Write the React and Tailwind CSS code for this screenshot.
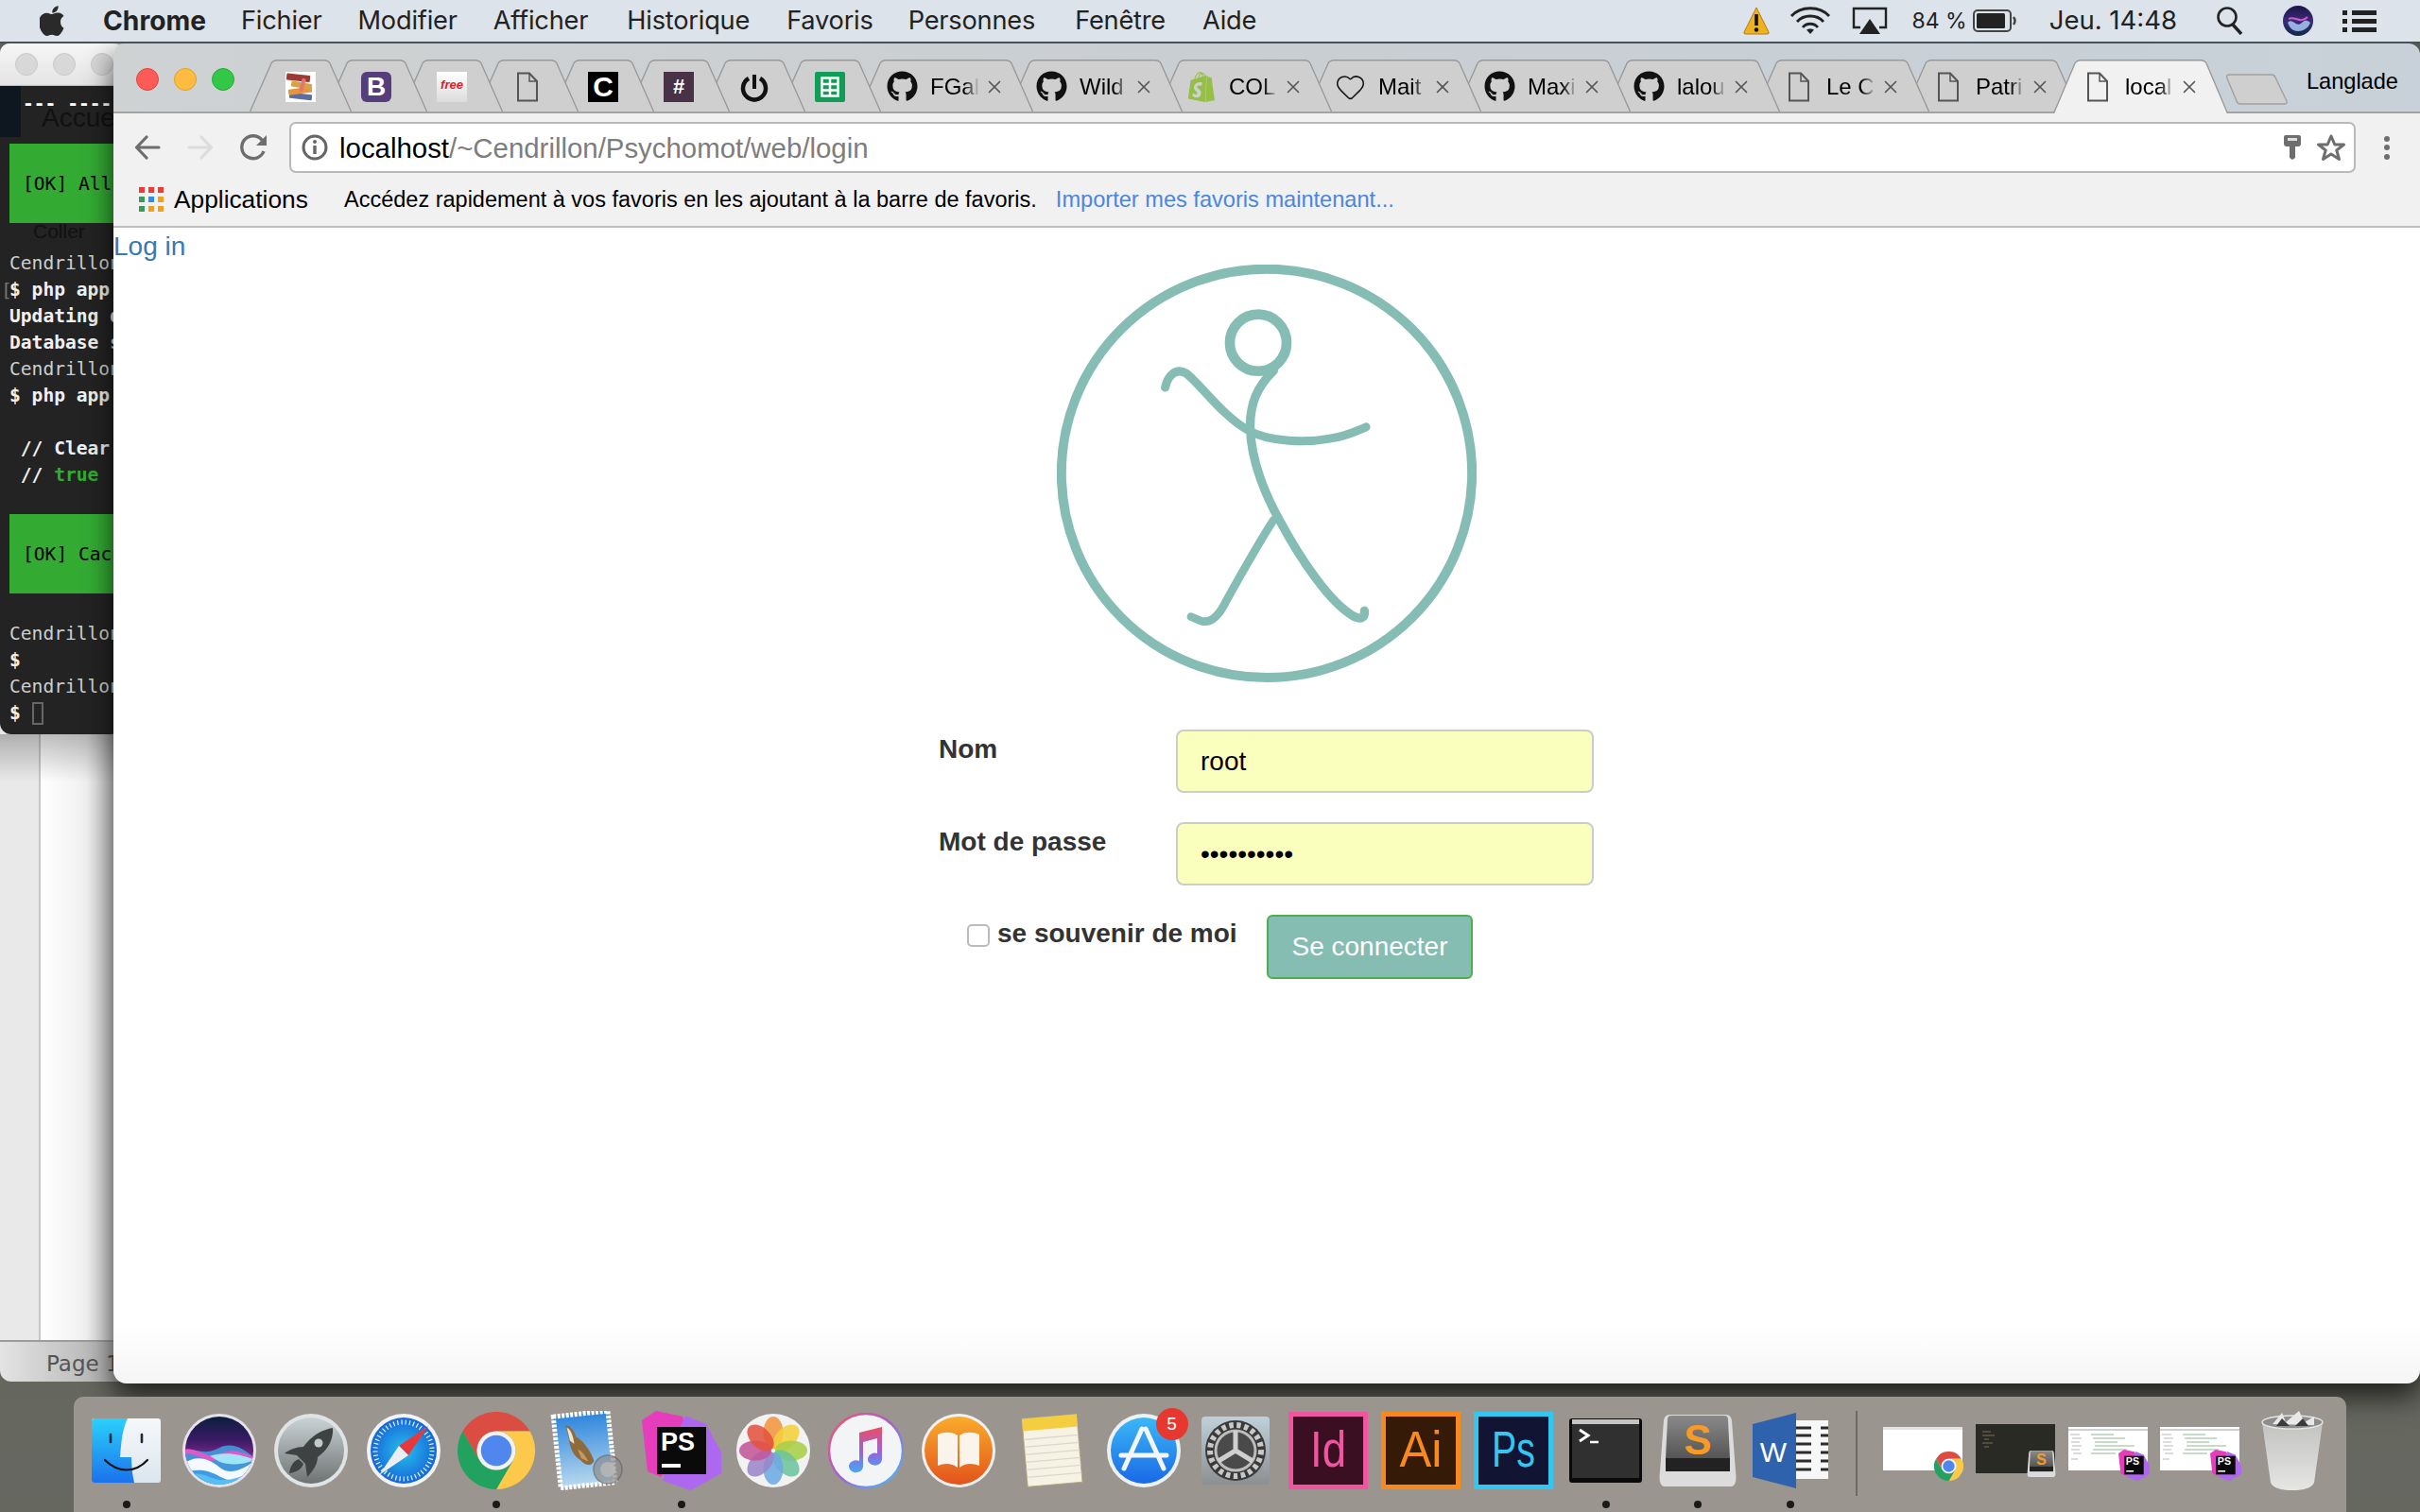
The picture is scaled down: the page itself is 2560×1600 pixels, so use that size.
import React from 'react';
import { Heart, X } from 'lucide-react';
import { FaGithub } from 'react-icons/fa';
import { SiShopify } from 'react-icons/si';

const FileIcon = () => (
  <svg width="24" height="32" viewBox="0 0 24 32" fill="none" stroke="#555" strokeWidth="2">
    <path d="M2 1.5H14L22 10V30.5H2Z" />
    <path d="M14 1.5V10H22" strokeWidth="1.5" />
  </svg>
);

const BooksIcon = () => (
  <svg width="32" height="32" viewBox="0 0 32 32">
    <rect width="32" height="32" fill="#fff" />
    <rect x="4" y="23" width="24" height="6" rx="1" fill="#5a6ea0" transform="rotate(6 16 26)" />
    <rect x="3" y="17" width="25" height="6" rx="1" fill="#e6953a" transform="rotate(-8 16 20)" />
    <rect x="6" y="11" width="22" height="6" rx="1" fill="#d7a24a" transform="rotate(10 16 14)" />
    <rect x="1" y="3" width="25" height="7" rx="1" fill="#9c3b36" transform="rotate(6 16 7)" />
    <rect x="16" y="7" width="4" height="14" fill="#e8746a" transform="rotate(15 18 14)" />
  </svg>
);

const PowerIcon = () => (
  <svg width="32" height="32" viewBox="0 0 32 32" fill="none" stroke="#111">
    <path d="M10 7A12 12 0 1 0 22 7" strokeWidth="4.5" />
    <path d="M16 3V18" strokeWidth="4" />
    <path d="M8 27A12 12 0 0 0 24 27" strokeWidth="3" />
  </svg>
);

const SheetsIcon = () => (
  <div className="w-[32px] h-[32px] rounded-[2px] bg-[#0f9d58] flex items-center justify-center">
    <svg width="20" height="22" viewBox="0 0 20 22" fill="none" stroke="#fff" strokeWidth="2.5">
      <rect x="1.5" y="1.5" width="17" height="19" />
      <path d="M1.5 8H18.5M1.5 14.5H18.5M10 1.5V20.5" />
    </svg>
  </div>
);

const pinnedTabs = [
  <BooksIcon />,
  <div className="w-[32px] h-[32px] rounded-[6px] bg-[#563d7c] text-white font-bold text-[28px] leading-[32px] text-center">B</div>,
  <div className="w-[32px] h-[32px] bg-gradient-to-b from-white to-[#dcdcdc] text-[#d8232a] italic font-bold text-[13px] leading-[28px] text-center">free</div>,
  <FileIcon />,
  <div className="w-[32px] h-[32px] bg-black text-white font-bold text-[30px] leading-[32px] text-center">C</div>,
  <div className="w-[32px] h-[32px] bg-[#4a3246] text-white font-bold text-[22px] leading-[32px] text-center">#</div>,
  <PowerIcon />,
  <SheetsIcon />,
];

const ghIcon = <FaGithub size={33} color="#111" />;

const openTabs = [
  { title: 'FGal', icon: ghIcon },
  { title: 'Wild', icon: ghIcon },
  { title: 'COL', icon: <SiShopify size={32} color="#95bf47" /> },
  { title: 'Mait', icon: <Heart size={36} strokeWidth={1.1} color="#111" /> },
  { title: 'Maxi', icon: ghIcon },
  { title: 'lalou', icon: ghIcon },
  { title: 'Le C', icon: <FileIcon /> },
  { title: 'Patri', icon: <FileIcon /> },
  { title: 'local', icon: <FileIcon />, active: true },
];

// forme du tab, les pentes se recouvrent entre voisins
const TabShape = ({ w, h, active }) => (
  <svg className="absolute inset-0" width={w} height={h} viewBox={`0 0 ${w} ${h}`}>
    <path
      d={`M0.5 ${h} L${23} 4 Q25 0.8 29 0.8 H${w - 29} Q${w - 25} 0.8 ${w - 23} 4 L${w - 0.5} ${h}`}
      fill={active ? '#f1f1f1' : '#cfcfcf'}
      stroke="#999"
      strokeWidth="1.4"
    />
  </svg>
);

const TabStrip = () => (
  <div className="relative h-[74px] shrink-0 border-b-2 border-[#a3a3a3] bg-gradient-to-r from-[#cfd2d3] via-[#c9ced2] to-[#c8d1d9] flex items-start pt-[17px] pl-[144px]">
    <div className="absolute left-[24px] top-[26px] flex gap-[16px]">
      <div className="w-[24px] h-[24px] rounded-full bg-[#fc5b57] border border-[#e2463f]" />
      <div className="w-[24px] h-[24px] rounded-full bg-[#fdbc40] border border-[#dfa023]" />
      <div className="w-[24px] h-[24px] rounded-full bg-[#33c748] border border-[#27aa35]" />
    </div>
    {pinnedTabs.map((icon, i) => (
      <div key={i} className="relative w-[108px] h-[55px] shrink-0 -mr-[28px]" style={{ zIndex: 40 - i }}>
        <TabShape w={108} h={55} />
        <div className="relative h-full flex items-center justify-center pt-[2px]">{icon}</div>
      </div>
    ))}
    {openTabs.map((t, i) => (
      <div
        key={t.title}
        className={`relative w-[185px] shrink-0 -mr-[27px] ${i === 0 ? 'ml-[4px]' : ''} ${t.active ? 'h-[57px]' : 'h-[55px]'}`}
        style={{ zIndex: t.active ? 50 : 30 - i }}
      >
        <TabShape w={185} h={t.active ? 57 : 55} active={t.active} />
        <div className="relative h-[55px] flex items-center pt-[2px] text-[24px] text-black">
          <div className="w-[63px] pl-[30px] flex justify-center shrink-0">{t.icon}</div>
          <span className="ml-[13px] w-[52px] overflow-hidden whitespace-nowrap shrink-0 [mask-image:linear-gradient(to_right,black_70%,transparent)]">{t.title}</span>
          <X size={22} strokeWidth={1.8} color="#555" className="ml-[5px] shrink-0" />
        </div>
      </div>
    ))}
    <svg className="absolute left-[2233px] top-[31px]" width="68" height="35" viewBox="0 0 68 35">
      <path d="M3 6Q1 2 6 2H50Q53 2 54 5L66 30Q67 33 63 33H17Q14 33 13 30Z" fill="#cfcfcf" stroke="#a0a0a0" strokeWidth="1.4" />
    </svg>
    <span className="absolute right-[23px] top-[27px] text-[23.6px] leading-[26px] text-black">Langlade</span>
  </div>
);

const Toolbar = () => (
  <div className="h-[121px] shrink-0 bg-[#f1f1f1] border-b-2 border-[#bdbdbd] flex flex-col">
    <div className="h-[54px] mt-[9px] flex items-center shrink-0">
      <svg className="ml-[22px]" width="28" height="26" viewBox="0 0 28 26" fill="none" stroke="#6e6e6e" strokeWidth="3.2" strokeLinecap="round" strokeLinejoin="round">
        <path d="M26 13H3M13 2L2.5 13L13 24" />
      </svg>
      <svg className="ml-[28px]" width="28" height="26" viewBox="0 0 28 26" fill="none" stroke="#dcdcdc" strokeWidth="3.2" strokeLinecap="round" strokeLinejoin="round">
        <path d="M2 13H25M15 2L25.5 13L15 24" />
      </svg>
      <svg className="ml-[28px]" width="30" height="28" viewBox="0 0 30 28" fill="none" stroke="#6e6e6e" strokeWidth="3.4">
        <path d="M25 18A12 12 0 1 1 23 6L26 9" />
        <path d="M28 1V12H17Z" fill="#6e6e6e" stroke="none" />
      </svg>
      <div className="ml-[22px] flex-1 h-[54px] bg-white border-2 border-[#b9b9b9] rounded-[7px] flex items-center pl-[11px]">
        <svg width="28" height="28" viewBox="0 0 28 28" fill="none" stroke="#666">
          <circle cx="14" cy="14" r="12" strokeWidth="3" />
          <path d="M14 12V21" strokeWidth="3.4" />
          <circle cx="14" cy="8" r="2" fill="#666" stroke="none" />
        </svg>
        <span className="ml-[12px] mt-[2px] text-[29.4px] leading-[34px] text-[#7d7d7d] whitespace-nowrap">
          <span className="text-black">localhost</span>/~Cendrillon/Psychomot/web/login
        </span>
        <svg className="ml-auto" width="18" height="26" viewBox="0 0 18 26">
          <path d="M2 0H16Q18 0 18 2V9Q18 12 15 12H12V24L9 26L6 24V12H3Q0 12 0 9V2Q0 0 2 0Z" fill="#6e6e6e" />
          <rect x="4" y="3" width="10" height="3" fill="#dedede" />
        </svg>
        <svg className="ml-[16px] mr-[8px]" width="32" height="30" viewBox="0 0 32 30" fill="none" stroke="#6e6e6e" strokeWidth="3">
          <path d="M16 3L19.8 12H29.5L21.8 18L24.5 27.5L16 22L7.5 27.5L10.2 18L2.5 12H12.2Z" strokeLinejoin="round" />
        </svg>
      </div>
      <div className="w-[68px] pr-[3px] flex flex-col items-center gap-[3.5px]">
        <div className="w-[6px] h-[6px] rounded-full bg-[#6e6e6e]" />
        <div className="w-[6px] h-[6px] rounded-full bg-[#6e6e6e]" />
        <div className="w-[6px] h-[6px] rounded-full bg-[#6e6e6e]" />
      </div>
    </div>
    <div className="flex-1 flex items-center pl-[27px]">
      <div className="grid grid-cols-3 gap-[4px] w-[26px]">
        {['#ef3b36', '#ef3b36', '#ef3b36', '#3a9b5c', '#2f8cf0', '#f0a020', '#3a9b5c', '#f0a020', '#f0a020'].map((c, i) => (
          <div key={i} className="h-[6px]" style={{ background: c }} />
        ))}
      </div>
      <span className="ml-[11px] mt-[2px] w-[180px] text-[26.3px] text-black">Applications</span>
      <span className="mt-[2px] text-[23.5px] text-black whitespace-nowrap">Accédez rapidement à vos favoris en les ajoutant à la barre de favoris.</span>
      <span className="ml-[20px] mt-[2px] text-[23.6px] text-[#4a86e0] whitespace-nowrap">Importer mes favoris maintenant...</span>
    </div>
  </div>
);

const Logo = () => (
  <svg className="mx-auto block" width="444" height="442" viewBox="85 60 1330 1325" fill="none" stroke="#85bdb5" strokeLinecap="round">
    <ellipse cx="750" cy="722" rx="651" ry="648" strokeWidth="30" />
    <circle cx="723" cy="308" r="90" strokeWidth="32" />
    <path d="M772 396C722 445 695 500 698 580C700 680 745 790 790 870C860 1000 950 1130 1020 1172C1050 1190 1062 1180 1060 1158" strokeWidth="28" />
    <path d="M428 450C435 415 460 385 495 405C540 440 610 540 690 585C760 625 880 625 950 612C1000 605 1030 590 1065 575" strokeWidth="27" />
    <path d="M772 870C720 950 670 1040 620 1130C595 1180 570 1200 540 1190L510 1177" strokeWidth="26" />
  </svg>
);

const LoginForm = () => (
  <div className="w-[694px] mx-auto mt-[50px] text-[28px] leading-[40px] text-[#333] font-bold">
    <div className="flex items-start">
      <label className="w-[251px] pt-[1px]">Nom</label>
      <input readOnly value="root" className="w-[442px] h-[67px] bg-[#faffbd] border-2 border-[#ccc] rounded-[8px] pl-[24px] text-black font-normal outline-none" />
    </div>
    <div className="flex items-start mt-[31px]">
      <label className="w-[251px] pt-[1px]">Mot de passe</label>
      <input readOnly type="password" value="••••••••••" className="w-[442px] h-[67px] bg-[#faffbd] border-2 border-[#ccc] rounded-[8px] pl-[24px] text-black font-normal outline-none" />
    </div>
    <div className="flex items-start mt-[31px]">
      <label className="w-[347px] pl-[30px] flex items-start">
        <input type="checkbox" readOnly className="appearance-none w-[24px] h-[24px] mt-[10px] bg-white border-2 border-[#bbb] rounded-[5px] shrink-0" />
        <span className="ml-[8px] whitespace-nowrap">se souvenir de moi</span>
      </label>
      <button className="w-[218px] h-[68px] bg-[#85bdb3] border-2 border-[#4cae4c] rounded-[6px] text-white font-normal">Se connecter</button>
    </div>
  </div>
);

const BrowserWindow = () => (
  <div className="absolute left-[120px] top-[46px] right-0 h-[1418px] rounded-t-[12px] rounded-b-[14px] overflow-hidden flex flex-col shadow-[0_14px_30px_rgba(0,0,0,0.7)] font-['Liberation_Sans',sans-serif]">
    <TabStrip />
    <Toolbar />
    <div className="flex-1 bg-gradient-to-b from-white via-white via-95% to-[#f5f5f5]">
      <a className="block text-[28px] leading-[39px] text-[#337ab7]">Log in</a>
      <Logo />
      <LoginForm />
    </div>
  </div>
);

const TermLine = ({ children, dim }) => (
  <div className={`h-[28px] leading-[30px] pl-[10px] whitespace-nowrap ${dim ? 'text-[#c9cfcf]' : 'text-[#f0f0f0] font-bold'}`}>{children}</div>
);

const GreenBlock = ({ children }) => (
  <div className="h-[84px] ml-[10px] pl-[14px] pt-[2px] bg-[#33ab33] text-black flex items-center whitespace-nowrap">{children}</div>
);

const TerminalWindow = () => (
  <div className="absolute left-0 top-[46px] w-[130px] h-[731px] rounded-t-[10px] rounded-b-[12px] overflow-hidden flex flex-col font-['DejaVu_Sans_Mono',monospace] text-[19.6px]">
    <div className="h-[45px] shrink-0 bg-gradient-to-b from-[#f6f6f6] to-[#e4e4e4] border-b border-[#bdbdbd] flex items-center gap-[16px] pl-[16px]">
      <div className="w-[24px] h-[24px] rounded-full bg-[#d8d8d8] border border-[#c8c8c8] shrink-0" />
      <div className="w-[24px] h-[24px] rounded-full bg-[#d8d8d8] border border-[#c8c8c8] shrink-0" />
      <div className="w-[24px] h-[24px] rounded-full bg-[#d8d8d8] border border-[#c8c8c8] shrink-0" />
    </div>
    <div className="relative flex-1 bg-[#232323] pt-[5px]">
      <div className="absolute left-0 top-0 w-[22px] h-[54px] bg-[#0e1620]" />
      <div className="absolute left-[44px] top-[16px] text-[28px] leading-[36px] text-[#111] font-['Liberation_Sans',sans-serif]">Accue</div>
      <div className="absolute left-[35px] top-[140px] text-[21px] leading-[28px] text-[#111] font-['Liberation_Sans',sans-serif]">Coller</div>
      <div className="absolute left-[1px] top-[203px] text-[#777] leading-[28px]">[</div>
      <div className="relative">
        <div className="h-[28px] leading-[28px] pl-[24px] text-white whitespace-nowrap font-bold">--- ----</div>
        <div className="h-[28px]" />
        <GreenBlock>[OK] All</GreenBlock>
        <div className="h-[28px]" />
        <TermLine dim>Cendrillon</TermLine>
        <TermLine>$ php app</TermLine>
        <TermLine>Updating d</TermLine>
        <TermLine>Database s</TermLine>
        <TermLine dim>Cendrillon</TermLine>
        <TermLine>$ php app</TermLine>
        <div className="h-[28px]" />
        <TermLine>&nbsp;// Clear</TermLine>
        <TermLine>&nbsp;// <span className="text-[#33ab33]">true</span></TermLine>
        <div className="h-[28px]" />
        <GreenBlock>[OK] Cac</GreenBlock>
        <div className="h-[28px]" />
        <TermLine dim>Cendrillon</TermLine>
        <TermLine>$</TermLine>
        <TermLine dim>Cendrillon</TermLine>
        <TermLine>
          <span className="inline-flex items-center">$<span className="ml-[12px] w-[12px] h-[24px] border-2 border-[#666]" /></span>
        </TermLine>
      </div>
    </div>
  </div>
);

const DocWindow = () => (
  <div className="absolute left-0 top-[46px] w-[140px] h-[1416px] rounded-t-[10px] rounded-b-[12px] overflow-hidden flex flex-col font-['DejaVu_Sans',sans-serif]">
    <div className="relative flex-1 flex">
      <div className="w-[41px] bg-[#e9e9e9]" />
      <div className="w-[2px] bg-[#c6c6c6]" />
      <div className="flex-1 bg-gradient-to-r from-white via-[#f0f0f0] to-[#b4b4b4]" />
      <div className="absolute left-0 right-0 top-[731px] h-[50px] bg-gradient-to-b from-black/25 to-transparent" />
    </div>
    <div className="h-[44px] shrink-0 border-t-2 border-[#9c9c9c] bg-gradient-to-r from-[#e4e4e4] to-[#a8a8a8] pl-[49px] pt-[3px] text-[23px] leading-[40px] text-[#555] whitespace-nowrap">Page 1</div>
  </div>
);

const StatusIcons = () => (
  <div className="ml-auto flex items-center pr-[46px] text-[#222] tracking-normal">
    <svg width="30" height="30" viewBox="0 0 30 30">
      <path d="M15 1L28 27Q29 29 26 29H4Q1 29 2 27Z" fill="#eeb120" stroke="#b47b1c" strokeWidth="1" />
      <path d="M15 8V20" stroke="#111" strokeWidth="3.6" />
      <circle cx="15" cy="24.5" r="2.2" fill="#111" />
    </svg>
    <svg className="ml-[20px]" width="44" height="30" viewBox="0 0 44 30" fill="none" stroke="#222" strokeWidth="2.8">
      <path d="M2 10C12 -1 32 -1 42 10" />
      <path d="M8 16C15 8 29 8 36 16" />
      <path d="M14 22C18 17 26 17 30 22" />
      <path d="M22 29L18 24.5C20 23 24 23 26 24.5Z" fill="#222" stroke="none" />
    </svg>
    <svg className="ml-[22px]" width="38" height="30" viewBox="0 0 38 30" fill="none" stroke="#222" strokeWidth="2.4">
      <path d="M9 22H2V2H36V22H29" />
      <path d="M19 13L30 29H8Z" fill="#222" stroke="none" />
    </svg>
    <span className="ml-[26px] text-[23px] whitespace-nowrap">84 %</span>
    <svg className="ml-[6px]" width="46" height="24" viewBox="0 0 46 24" fill="none">
      <rect x="1" y="1" width="39" height="22" rx="4" stroke="#444" strokeWidth="2" />
      <rect x="4" y="4" width="30" height="16" rx="1.5" fill="#222" />
      <path d="M43 8Q46 12 43 16" stroke="#444" strokeWidth="2.5" />
    </svg>
    <span className="ml-[35px] text-[27.5px] whitespace-nowrap">Jeu. 14:48</span>
    <svg className="ml-[41px]" width="30" height="30" viewBox="0 0 30 30" fill="none" stroke="#222" strokeWidth="2.6">
      <circle cx="12" cy="11" r="9.500" />
      <path d="M18 19L27 29" strokeWidth="3.4" />
    </svg>
    <svg className="ml-[41px]" width="32" height="32" viewBox="0 0 32 32">
      <defs>
        <linearGradient id="siriMini" x1="0" y1="0" x2="0" y2="1">
          <stop offset="0" stopColor="#1b1546" />
          <stop offset="0.5" stopColor="#3a2a7a" />
          <stop offset="1" stopColor="#0d2a4a" />
        </linearGradient>
      </defs>
      <circle cx="16" cy="16" r="16" fill="url(#siriMini)" />
      <path d="M5 18C10 12 14 24 20 18C24 14 27 16 29 18C27 24 21 27 16 27C10 27 7 23 5 18Z" fill="#a9c8f5" opacity="0.85" />
      <path d="M6 14C12 10 18 20 26 12" stroke="#d05ac8" strokeWidth="2" fill="none" />
    </svg>
    <div className="ml-[31px] flex flex-col gap-[4px]">
      {[0, 1, 2].map((i) => (
        <div key={i} className="flex gap-[5px]">
          <div className="w-[5px] h-[5px] bg-[#222]" />
          <div className="w-[26px] h-[5px] bg-[#222]" />
        </div>
      ))}
    </div>
  </div>
);

const MenuBar = () => (
  <div className="relative h-[46px] border-b-2 border-[#48525c] bg-[#dde3ea] flex items-center text-[#222] font-['Inter',sans-serif] text-[27.2px] tracking-[-0.2px]">
    <svg className="ml-[42px]" width="27" height="32" viewBox="0 0 27 32" fill="#2a2a2a">
      <path d="M22 17C22 13 25 11.500 25.500 11C23.500 8 20.500 7.600 19.300 7.600C16.700 7.300 14.300 9.100 13 9.100C11.600 9.100 9.600 7.600 7.400 7.700C4.500 7.700 1.900 9.400 0.500 12C-2.400 17 -0.200 24.300 2.600 28.300C4 30.300 5.600 32 7.700 32C9.700 31.900 10.500 30.700 13 30.700C15.400 30.700 16.200 32 18.300 32C20.500 32 21.900 30 23.200 28C24.800 25.800 25.400 23.600 25.500 23.500C25.400 23.400 22 22.200 22 17ZM18 5.400C19 4 19.800 2.200 19.600 0.300C18 0.400 16 1.400 14.900 2.700C13.900 3.900 13 5.700 13.300 7.500C15 7.600 16.900 6.600 18 5.400Z" />
    </svg>
    <span className="ml-[40px] font-bold text-[28.2px] tracking-normal">Chrome</span>
    <span className="ml-[37px]">Fichier</span>
    <span className="ml-[38px]">Modifier</span>
    <span className="ml-[38px]">Afficher</span>
    <span className="ml-[41px]">Historique</span>
    <span className="ml-[39px]">Favoris</span>
    <span className="ml-[37px]">Personnes</span>
    <span className="ml-[42px]">Fenêtre</span>
    <span className="ml-[39px]">Aide</span>
    <StatusIcons />
  </div>
);

/* ---------- icones du dock ---------- */

const Finder = () => (
  <svg width="73" height="68" viewBox="0 0 73 68">
    <defs>
      <linearGradient id="fnL" x1="0" y1="0" x2="0" y2="1">
        <stop offset="0" stopColor="#2ad1fb" />
        <stop offset="1" stopColor="#1b72ec" />
      </linearGradient>
      <linearGradient id="fnR" x1="0" y1="0" x2="0" y2="1">
        <stop offset="0" stopColor="#f6f8fa" />
        <stop offset="1" stopColor="#dbe6ef" />
      </linearGradient>
    </defs>
    <rect width="73" height="68" rx="3" fill="url(#fnR)" />
    <path d="M3 0H38C32 12 31 28 30 41H42C42 50 43 60 45 68H3Q0 68 0 65V3Q0 0 3 0Z" fill="url(#fnL)" />
    <path d="M20 17V25M53 17V25" stroke="#1c2b3a" strokeWidth="2.6" strokeLinecap="round" />
    <path d="M14 44C28 58 46 58 59 44" stroke="#111" strokeWidth="2.2" fill="none" strokeLinecap="round" />
  </svg>
);

const Siri = () => (
  <svg width="80" height="78" viewBox="0 0 80 80">
    <defs>
      <linearGradient id="siriBg" x1="0" y1="0" x2="0" y2="1">
        <stop offset="0" stopColor="#0a1f3c" />
        <stop offset="0.35" stopColor="#3b1a66" />
        <stop offset="0.6" stopColor="#7a2c8c" />
        <stop offset="1" stopColor="#1c7ccf" />
      </linearGradient>
      <clipPath id="siriClip">
        <circle cx="40" cy="40" r="37" />
      </clipPath>
    </defs>
    <circle cx="40" cy="40" r="40" fill="#e6e2ea" />
    <circle cx="40" cy="40" r="37" fill="url(#siriBg)" />
    <g clipPath="url(#siriClip)">
      <path d="M0 40C12 36 22 46 38 38C52 30 66 36 80 50V80H0Z" fill="#3fb2ee" opacity="0.75" />
      <path d="M0 42C14 36 24 54 42 46C54 40 66 44 80 52" stroke="#ef53c7" strokeWidth="5" fill="none" opacity="0.9" />
      <path d="M2 54C12 46 26 46 40 58C52 68 66 60 80 50V62C66 72 54 76 40 68C26 60 14 60 2 64Z" fill="#f4faff" />
      <path d="M30 46C40 42 60 42 78 50C66 56 50 56 40 52Z" fill="#a5f0fc" opacity="0.9" />
      <path d="M4 68C20 60 30 72 42 72C54 72 66 68 76 62V80H4Z" fill="#58bdf0" />
    </g>
  </svg>
);

const Launchpad = () => (
  <svg width="78" height="78" viewBox="0 0 78 78">
    <defs>
      <linearGradient id="lpBg" x1="0" y1="0" x2="0" y2="1">
        <stop offset="0" stopColor="#c9d3d6" />
        <stop offset="1" stopColor="#6f7272" />
      </linearGradient>
    </defs>
    <circle cx="39" cy="39" r="39" fill="#dfe3e4" />
    <circle cx="39" cy="39" r="35" fill="url(#lpBg)" />
    <path d="M62 15C50 17 39 24 31 35C24 35 16 38 11 42L24 44L33 53L35 67C41 61 46 53 46 46C57 38 63 27 62 15Z" fill="#3f4243" />
    <circle cx="47" cy="31" r="4.500" fill="#c4c9c9" />
    <path d="M26 48C20 50 17 56 16 63C23 62 29 59 31 53Z" fill="#3f4243" />
  </svg>
);

const Safari = () => (
  <svg width="78" height="78" viewBox="0 0 78 78">
    <defs>
      <radialGradient id="sfBg">
        <stop offset="0" stopColor="#27c0ec" />
        <stop offset="1" stopColor="#1667d8" />
      </radialGradient>
    </defs>
    <circle cx="39" cy="39" r="39" fill="#f1f3f5" />
    <circle cx="39" cy="39" r="35" fill="url(#sfBg)" />
    <circle cx="39" cy="39" r="30" fill="none" stroke="#e6f2fb" strokeWidth="5" strokeDasharray="1.200 3" />
    <path d="M65 13L34 34L44 44Z" fill="#e8393a" />
    <path d="M13 65L44 44L34 34Z" fill="#eceff1" />
  </svg>
);

const ChromeLogo = ({ size = 82 }) => (
  <svg width={size} height={size} viewBox="0 0 48 48">
    <path d="M3.2 12A24 24 0 0 1 44.800 12H24a12 12 0 0 0-10.400 18Z" fill="#db4d42" />
    <path d="M44.800 12A24 24 0 0 1 24 48L34.400 30A12 12 0 0 0 24 12Z" fill="#fdc94b" />
    <path d="M24 48A24 24 0 0 1 3.200 12L13.600 30A12 12 0 0 0 34.400 30Z" fill="#21a25f" />
    <circle cx="24" cy="24" r="12" fill="#f2f2f2" />
    <circle cx="24" cy="24" r="9.500" fill="#5087ee" />
  </svg>
);

const Mail = () => (
  <svg width="84" height="84" viewBox="0 0 84 84">
    <defs>
      <linearGradient id="mlBg" x1="0" y1="0" x2="0" y2="1">
        <stop offset="0" stopColor="#2d85dd" />
        <stop offset="1" stopColor="#b9d9ee" />
      </linearGradient>
    </defs>
    <g transform="rotate(-6 36 40)">
      <rect x="8" y="3" width="58" height="76" fill="url(#mlBg)" stroke="#fff" strokeWidth="5" strokeDasharray="3 1.500" />
      <path d="M20 14C25 13 28 20 30 27C36 30 44 44 46 54C42 60 36 58 32 52C24 46 22 36 22 28Z" fill="#8f6a3c" />
      <path d="M21 16C25 18 27 26 27 34L23 30Z" fill="#ece6d6" />
      <path d="M30 40C34 42 38 48 40 54L33 50Z" fill="#c49a5e" />
    </g>
    <circle cx="62" cy="62" r="15" fill="#8d8d8d" opacity="0.7" stroke="#666" strokeWidth="1.500" />
    <circle cx="62" cy="62" r="8" fill="#b9b9b9" opacity="0.8" />
  </svg>
);

const PsLogo = ({ size = 84 }) => (
  <svg width={size} height={size} viewBox="0 0 84 84">
    <path d="M0 10L15 0L43 6L50 30L20 70L6 64Z" fill="#e53dbb" />
    <path d="M46 5L68 14L84 44L84 66L52 84L22 74L30 40Z" fill="#ae68ef" />
    <rect x="16" y="17" width="52" height="50" fill="#0a0a0a" />
    <text x="20" y="42" fontFamily="Liberation Sans, sans-serif" fontWeight="700" fontSize="27" fill="#fff">PS</text>
    <rect x="21" y="56" width="20" height="4" fill="#fff" />
  </svg>
);

const Photos = () => (
  <svg width="78" height="78" viewBox="0 0 78 78">
    <circle cx="39" cy="39" r="39" fill="#f2f2f2" />
    {[
      ['#f3953d', 0],
      ['#f2cf3c', 45],
      ['#a7cf48', 90],
      ['#6cc39d', 135],
      ['#6daae2', 180],
      ['#9a86c8', 225],
      ['#c3569a', 270],
      ['#e3533f', 315],
    ].map(([c, a]) => (
      <ellipse key={a} cx="39" cy="20" rx="10.500" ry="17" fill={c} opacity="0.88" transform={`rotate(${a} 39 39)`} />
    ))}
  </svg>
);

const Music = () => (
  <svg width="80" height="80" viewBox="0 0 80 80">
    <defs>
      <linearGradient id="muRing" x1="0" y1="0" x2="1" y2="1">
        <stop offset="0" stopColor="#f0566a" />
        <stop offset="0.5" stopColor="#a35fd5" />
        <stop offset="1" stopColor="#3fc4f5" />
      </linearGradient>
      <linearGradient id="muNote" x1="0" y1="0" x2="0" y2="1">
        <stop offset="0" stopColor="#f04b63" />
        <stop offset="0.6" stopColor="#8b6be0" />
        <stop offset="1" stopColor="#44a9ef" />
      </linearGradient>
    </defs>
    <circle cx="40" cy="40" r="39" fill="#f3f4f6" stroke="url(#muRing)" strokeWidth="2.500" />
    <path d="M33 21L57 15V49A7.500 6.500 0 1 1 52 43V27L37 31V57A7.500 6.500 0 1 1 33 51Z" fill="url(#muNote)" />
  </svg>
);

const Books = () => (
  <svg width="78" height="78" viewBox="0 0 78 78">
    <defs>
      <linearGradient id="bkBg" x1="0" y1="0" x2="0" y2="1">
        <stop offset="0" stopColor="#f9ac2c" />
        <stop offset="1" stopColor="#e2541c" />
      </linearGradient>
    </defs>
    <circle cx="39" cy="39" r="39" fill="#f1f1f1" />
    <circle cx="39" cy="39" r="36" fill="url(#bkBg)" />
    <path d="M38 23C32 19 24 19 17 22V55C24 52 32 52 38 57ZM40 23C46 19 54 19 61 22V55C54 52 46 52 40 57Z" fill="#faf4ea" />
  </svg>
);

const Notes = () => (
  <svg width="72" height="84" viewBox="0 0 72 84">
    <g transform="rotate(-5 36 42)">
      <rect x="8" y="6" width="58" height="72" fill="#f6f3e4" stroke="#b3a477" strokeWidth="0.800" />
      <rect x="8" y="6" width="58" height="13" fill="#f5cd41" />
      <path d="M8 28H66M8 36H66M8 44H66M8 52H66M8 60H66M8 68H66" stroke="#d9d8d0" strokeWidth="1.300" />
    </g>
  </svg>
);

const AppStore = () => (
  <div className="relative">
    <svg width="78" height="78" viewBox="0 0 78 78">
      <defs>
        <linearGradient id="asBg" x1="0" y1="0" x2="0" y2="1">
          <stop offset="0" stopColor="#3bb7f6" />
          <stop offset="1" stopColor="#1a69e6" />
        </linearGradient>
      </defs>
      <circle cx="39" cy="39" r="39" fill="#eef1f3" />
      <circle cx="39" cy="39" r="35" fill="url(#asBg)" />
      <path d="M37 16L18 58M41 16L60 58M15 44H63" stroke="#f3f6f8" strokeWidth="5" strokeLinecap="round" fill="none" />
    </svg>
    <div className="absolute -top-[6px] -right-[8px] w-[34px] h-[34px] rounded-full bg-[#e8372e] text-white text-[19px] leading-[34px] text-center font-['Liberation_Sans',sans-serif]">5</div>
  </div>
);

const SystemPrefs = () => (
  <svg width="72" height="72" viewBox="0 0 72 72">
    <defs>
      <linearGradient id="spBg" x1="0" y1="0" x2="0" y2="1">
        <stop offset="0" stopColor="#bfd0da" />
        <stop offset="1" stopColor="#8d8f92" />
      </linearGradient>
    </defs>
    <rect width="72" height="72" rx="4" fill="url(#spBg)" />
    <circle cx="36" cy="36" r="32" fill="#3a3a3a" />
    <circle cx="36" cy="36" r="27" fill="none" stroke="#c9c9c9" strokeWidth="6" strokeDasharray="4.500 3.500" />
    <circle cx="36" cy="36" r="21" fill="#4a4a4a" stroke="#bdbdbd" strokeWidth="3" />
    <path d="M36 36V15M36 36L54 47M36 36L18 47" stroke="#cfcfcf" strokeWidth="5" />
  </svg>
);

const AdobeIcon = ({ label, border, bg, color, tw }) => (
  <svg width="84" height="82" viewBox="0 0 84 82">
    <rect x="2.500" y="2.500" width="79" height="77" fill={bg} stroke={border} strokeWidth="5" />
    <text x="42" y="58" textAnchor="middle" fontFamily="Liberation Sans, sans-serif" fontSize="53" textLength={tw} lengthAdjust="spacingAndGlyphs" fill={color}>{label}</text>
  </svg>
);

const Terminal = () => (
  <svg width="77" height="68" viewBox="0 0 77 68">
    <rect width="77" height="68" rx="3" fill="#0a0a0a" />
    <rect x="3" y="6" width="71" height="57" fill="#303030" />
    <rect x="3" y="1" width="71" height="5" fill="#c4c4c4" />
    <path d="M11 12L20 18L11 24" stroke="#fff" strokeWidth="3" fill="none" />
    <path d="M22 25H31" stroke="#fff" strokeWidth="2.500" />
  </svg>
);

const Sublime = ({ w = 84, h = 76 }) => (
  <svg width={w} height={h} viewBox="0 0 84 76">
    <defs>
      <linearGradient id="sbBg" x1="0" y1="0" x2="0" y2="1">
        <stop offset="0" stopColor="#8a8a8a" />
        <stop offset="1" stopColor="#555" />
      </linearGradient>
    </defs>
    <path d="M2 60L6 6Q7 0 12 0H72Q77 0 78 6L82 60Q84 74 78 76H6Q0 74 2 60Z" fill="#dcdcdc" />
    <path d="M8 46L10 5Q10 1 14 1H70Q74 1 74 5L76 46Z" fill="url(#sbBg)" />
    <rect x="8" y="46" width="68" height="14" fill="#222" />
    <text x="42" y="42" textAnchor="middle" fontFamily="Liberation Sans, sans-serif" fontWeight="700" fontSize="44" fill="#f89a27">S</text>
  </svg>
);

const Word = () => (
  <svg width="80" height="80" viewBox="0 0 80 80">
    <rect x="44" y="8" width="36" height="62" fill="#f7f7f7" />
    <path d="M46 16H80M46 24H80M46 33H80M46 42H80M46 51H80M46 60H80" stroke="#2b2b2b" strokeWidth="3" strokeDasharray="16 10 20" />
    <path d="M0 12L46 0V80L0 68Z" fill="#2f62ad" />
    <text x="22" y="52" textAnchor="middle" fontFamily="Liberation Sans, sans-serif" fontSize="30" fill="#fff">W</text>
  </svg>
);

const Trash = () => (
  <svg width="66" height="84" viewBox="0 0 66 84">
    <defs>
      <linearGradient id="trBg" x1="0" y1="0" x2="0" y2="1">
        <stop offset="0" stopColor="#c2c2c0" />
        <stop offset="1" stopColor="#e6e6e4" />
      </linearGradient>
    </defs>
    <path d="M1 12C10 18 56 18 65 12L56 76Q52 84 33 84Q14 84 10 76Z" fill="url(#trBg)" />
    <ellipse cx="33" cy="12" rx="32" ry="7" fill="#8d8d8d" stroke="#e4e4e4" strokeWidth="1.500" />
    <path d="M12 14L22 2L26 12L40 0L46 12L56 6L56 15Z" fill="#e9e9e9" />
    <path d="M16 16L22 8L30 16ZM36 16L44 8L50 16Z" fill="#3b3b3b" />
  </svg>
);

const ThumbLines = ({ dark }) => (
  <svg className="absolute inset-0" width="84" height="46" viewBox="0 0 84 46" fill="none">
    {dark ? (
      <path d="M7 8H16M7 12H20M9 16H14M7 20H18M9 24H14" stroke="#7d6d55" strokeWidth="1" />
    ) : (
      <>
        <path d="M0 3H84" stroke="#d0d0d0" strokeWidth="2" />
        <path d="M2 8H12M4 12H14M3 16H12M4 20H14M3 24H12M5 28H14M3 34H10" stroke="#b9b9b9" strokeWidth="1" />
        <path d="M24 8H48M26 12H60M28 16H52M28 20H70M26 24H62M24 28H50" stroke="#8eb98e" strokeWidth="1" />
      </>
    )}
  </svg>
);

const Thumb = ({ children, dark, lines, badge }) => (
  <div className="relative w-[84px] h-[84px]">
    <div className={`absolute left-0 w-[84px] ${dark ? 'h-[52px] top-[14px] bg-[#2a2a25]' : 'h-[46px] top-[17px] bg-white'}`}>
      {lines && <ThumbLines dark={dark} />}
      {!lines && <div className="h-[3px] bg-[#e2e2e2]" />}
    </div>
    <div className={`absolute ${badge}`}>{children}</div>
  </div>
);

const Dot = ({ on }) => <div className={`w-[8px] h-[8px] mt-[11px] rounded-full ${on ? 'bg-[#1a1a16]' : ''}`} />;

const apps = [
  { el: <Finder />, on: true },
  { el: <Siri /> },
  { el: <Launchpad /> },
  { el: <Safari /> },
  { el: <ChromeLogo />, on: true },
  { el: <Mail /> },
  { el: <PsLogo />, on: true },
  { el: <Photos /> },
  { el: <Music /> },
  { el: <Books /> },
  { el: <Notes /> },
  { el: <AppStore /> },
  { el: <SystemPrefs /> },
  { el: <AdobeIcon label="Id" border="#f0559f" bg="#3a0f22" color="#f0559f" tw={38} /> },
  { el: <AdobeIcon label="Ai" border="#f7891f" bg="#351a08" color="#f7891f" tw={45} /> },
  { el: <AdobeIcon label="Ps" border="#33c6f0" bg="#111433" color="#33c6f0" tw={46} /> },
  { el: <Terminal />, on: true },
  { el: <Sublime />, on: true },
  { el: <Word />, on: true },
];

const thumbs = [
  <Thumb badge="left-[54px] top-[43px]"><ChromeLogo size={31} /></Thumb>,
  <Thumb dark lines badge="left-[54px] top-[42px]"><Sublime w={31} h={28} /></Thumb>,
  <Thumb lines badge="left-[53px] top-[41px]"><PsLogo size={33} /></Thumb>,
  <Thumb lines badge="left-[53px] top-[41px]"><PsLogo size={33} /></Thumb>,
];

const Dock = () => (
  <div className="absolute left-[78px] top-[1478px] w-[2404px] h-[122px] rounded-t-[10px] bg-[#9a968f] flex items-start pl-[7px] pt-[15px]">
    {apps.map((a, i) => (
      <div key={i} className="w-[97.8px] shrink-0 flex flex-col items-center">
        <div className="h-[84px] flex items-center justify-center">{a.el}</div>
        <Dot on={a.on} />
      </div>
    ))}
    <div className="w-[2px] h-[90px] ml-[20px] bg-[#6e6b65]" />
    <div className="ml-[20px] flex">
      {thumbs.map((t, i) => (
        <div key={i} className="w-[97.8px] shrink-0 flex justify-center">{t}</div>
      ))}
      <div className="w-[97.8px] shrink-0 flex justify-center"><Trash /></div>
    </div>
  </div>
);

export default function App() {
  return (
    <div className="relative w-[2560px] h-[1600px] overflow-hidden bg-gradient-to-b from-[#5e6059] to-[#66675f]">
      <DocWindow />
      <TerminalWindow />
      <BrowserWindow />
      <Dock />
      <MenuBar />
    </div>
  );
}
